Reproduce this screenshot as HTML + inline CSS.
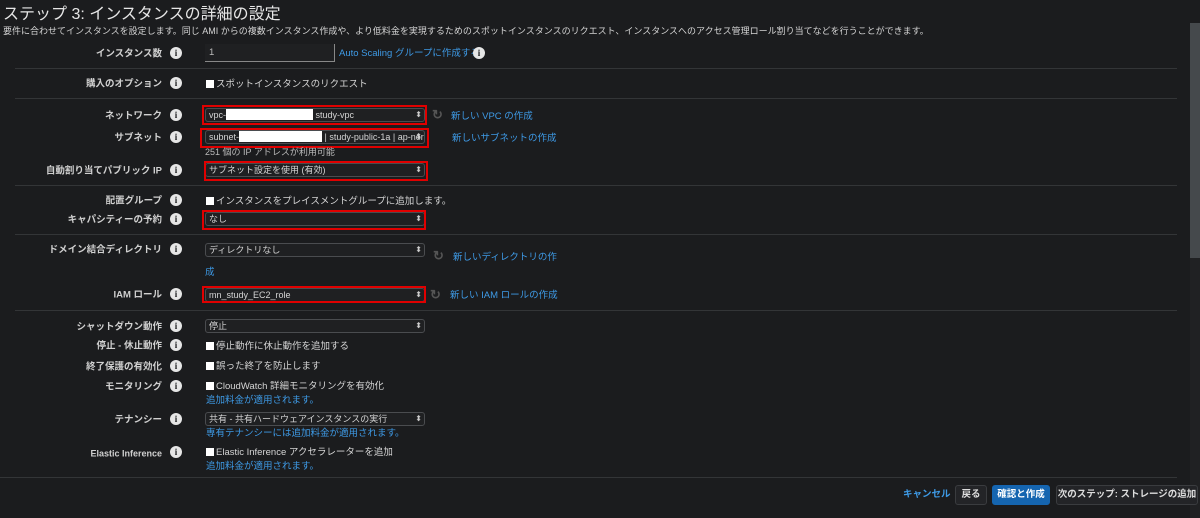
<!DOCTYPE html>
<html><head><meta charset="utf-8"><style>
*{margin:0;padding:0;box-sizing:border-box}
body{width:1200px;height:518px;background:#1b1c1e;color:#d5d5d5;font-family:"Liberation Sans","Noto Sans CJK JP",sans-serif;font-size:9.5px;line-height:12px;position:relative;overflow:hidden}
.a{position:absolute;white-space:nowrap;padding-top:2px}
.lbl{position:absolute;right:1038px;font-weight:bold;color:#d0d0d0;font-size:9.5px;transform:translateY(-38%)}
.i{position:absolute;left:170px;width:12px;height:12px;border-radius:50%;background:#e6e6e6;color:#1b1c1e;font:bold 9px "Liberation Serif",serif;text-align:center;line-height:12px;transform:translateY(-50%)}
.sep{position:absolute;left:15px;width:1162px;height:1px;background:#333537}
.sel{position:absolute;left:205px;width:220px;height:14px;background:#1f2022;border:1px solid #4a4c4f;border-radius:3px;color:#d5d5d5;padding-left:3px;line-height:12px;font-size:9px}
.sel:after{content:"⬍";position:absolute;right:2px;top:0;font-size:8px;color:#ccc}
.red{position:absolute;border:2px solid #e00000}
.lnk{color:#3e9ae6}
.cb{display:inline-block;width:8px;height:8px;background:#fff;margin-right:2px;vertical-align:-1px}
.ref{position:absolute;color:#555;font-size:13px;font-weight:bold;line-height:14px}
.btn{position:absolute;top:485px;height:20px;border:1px solid #3a3c3f;border-radius:3px;background:#232427;color:#ddd;font-weight:bold;font-size:9.5px;line-height:18px;text-align:center}
</style></head><body>
<div class="a" style="left:3px;top:5px;padding:0;font-size:16px;line-height:19px;color:#e6e6e6">ステップ 3: インスタンスの詳細の設定</div>
<div class="a" style="left:3px;top:23px;font-size:9px;color:#d5d5d5">要件に合わせてインスタンスを設定します。同じ AMI からの複数インスタンス作成や、より低料金を実現するためのスポットインスタンスのリクエスト、インスタンスへのアクセス管理ロール割り当てなどを行うことができます。</div>
<div class="a" style="left:1190px;top:23px;width:10px;height:235px;background:#45494c"></div>
<div class="a" style="left:1190px;top:258px;width:10px;height:260px;background:#202123"></div>

<div class="lbl" style="top:53px">インスタンス数</div><div class="i" style="top:53px">i</div>
<div class="a" style="left:205px;top:44px;width:130px;height:18px;background:#1f2022;border-right:1px solid #888;border-bottom:1px solid #888;padding:3px 4px;color:#bbb">1</div>
<div class="a lnk" style="left:339px;top:46px">Auto Scaling グループに作成する</div><div class="i" style="left:473px;top:53px">i</div>
<div class="sep" style="top:68px"></div>

<div class="lbl" style="top:83px">購入のオプション</div><div class="i" style="top:83px">i</div>
<div class="a" style="left:206px;top:77px"><span class="cb"></span>スポットインスタンスのリクエスト</div>
<div class="sep" style="top:98px"></div>

<div class="lbl" style="top:115px">ネットワーク</div><div class="i" style="top:115px">i</div>
<div class="sel" style="top:108px">vpc-<span style="display:inline-block;width:87px;height:11px;background:#fff;vertical-align:-2px"></span> study-vpc</div>
<div class="red" style="left:202px;top:105px;width:225px;height:20px"></div>
<div class="ref" style="left:432px;top:108px">↻</div>
<div class="a lnk" style="left:451px;top:109px">新しい VPC の作成</div>

<div class="lbl" style="top:137px">サブネット</div><div class="i" style="top:137px">i</div>
<div class="sel" style="top:130px">subnet-<span style="display:inline-block;width:83px;height:11px;background:#fff;vertical-align:-2px"></span> | study-public-1a | ap-nor</div>
<div class="red" style="left:200px;top:128px;width:229px;height:20px"></div>
<div class="a lnk" style="left:452px;top:131px">新しいサブネットの作成</div>
<div class="a" style="left:205px;top:144px;font-size:9px;color:#bbb">251 個の IP アドレスが利用可能</div>

<div class="lbl" style="top:170px">自動割り当てパブリック IP</div><div class="i" style="top:170px">i</div>
<div class="sel" style="top:163px">サブネット設定を使用 (有効)</div>
<div class="red" style="left:204px;top:161px;width:224px;height:20px"></div>
<div class="sep" style="top:185px"></div>

<div class="lbl" style="top:200px">配置グループ</div><div class="i" style="top:200px">i</div>
<div class="a" style="left:206px;top:194px"><span class="cb"></span>インスタンスをプレイスメントグループに追加します。</div>
<div class="lbl" style="top:219px">キャパシティーの予約</div><div class="i" style="top:219px">i</div>
<div class="sel" style="top:212px">なし</div>
<div class="red" style="left:202px;top:210px;width:224px;height:20px"></div>
<div class="sep" style="top:234px"></div>

<div class="lbl" style="top:249px">ドメイン結合ディレクトリ</div><div class="i" style="top:249px">i</div>
<div class="sel" style="top:243px">ディレクトリなし</div>
<div class="ref" style="left:433px;top:249px">↻</div>
<div class="a lnk" style="left:453px;top:250px">新しいディレクトリの作</div>
<div class="a lnk" style="left:205px;top:265px">成</div>

<div class="lbl" style="top:294px">IAM ロール</div><div class="i" style="top:294px">i</div>
<div class="sel" style="top:288px">mn_study_EC2_role</div>
<div class="red" style="left:202px;top:286px;width:224px;height:17px"></div>
<div class="ref" style="left:430px;top:288px">↻</div>
<div class="a lnk" style="left:450px;top:288px">新しい IAM ロールの作成</div>
<div class="sep" style="top:310px"></div>

<div class="lbl" style="top:326px">シャットダウン動作</div><div class="i" style="top:326px">i</div>
<div class="sel" style="top:319px">停止</div>
<div class="lbl" style="top:345px">停止 - 休止動作</div><div class="i" style="top:345px">i</div>
<div class="a" style="left:206px;top:339px"><span class="cb"></span>停止動作に休止動作を追加する</div>
<div class="lbl" style="top:366px">終了保護の有効化</div><div class="i" style="top:366px">i</div>
<div class="a" style="left:206px;top:359px"><span class="cb"></span>誤った終了を防止します</div>
<div class="lbl" style="top:386px">モニタリング</div><div class="i" style="top:386px">i</div>
<div class="a" style="left:206px;top:379px"><span class="cb"></span>CloudWatch 詳細モニタリングを有効化</div>
<div class="a lnk" style="left:206px;top:393px">追加料金が適用されます。</div>
<div class="lbl" style="top:419px">テナンシー</div><div class="i" style="top:419px">i</div>
<div class="sel" style="top:412px">共有 - 共有ハードウェアインスタンスの実行</div>
<div class="a lnk" style="left:206px;top:426px">専有テナンシーには追加料金が適用されます。</div>
<div class="lbl" style="top:452px;font-size:9px">Elastic Inference</div><div class="i" style="top:452px">i</div>
<div class="a" style="left:206px;top:445px"><span class="cb"></span>Elastic Inference アクセラレーターを追加</div>
<div class="a lnk" style="left:206px;top:459px">追加料金が適用されます。</div>
<div class="a" style="left:0;top:477px;width:1177px;height:1px;background:#333537;padding:0"></div>

<div class="a lnk" style="left:903px;top:487px;font-weight:bold">キャンセル</div>
<div class="btn" style="left:955px;width:32px">戻る</div>
<div class="btn" style="left:992px;width:58px;background:#1565b0;border-color:#1565b0;color:#fff">確認と作成</div>
<div class="btn" style="left:1056px;width:142px">次のステップ: ストレージの追加</div>
</body></html>
